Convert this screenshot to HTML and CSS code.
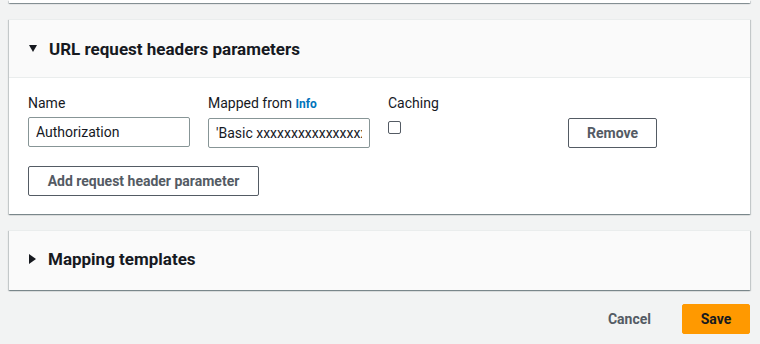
FILE: index.html
```html
<!DOCTYPE html>
<html lang="en">
    <head>
        <meta charset="UTF-8" />
        <meta name="viewport" content="width=device-width, initial-scale=1.0" />
        <title>URL request headers parameters</title>
        <link rel="stylesheet" href="styles.css">
    </head>
    <body>
        <main class="page">
            <div class="card card-cut"></div>

            <section class="card">
                <header class="card-header">
                    <span class="caret caret-down"></span>
                    <h2>URL request headers parameters</h2>
                </header>
                <div class="card-body">
                    <div class="param-row">
                        <div class="field">
                            <label for="headerName">Name</label>
                            <input id="headerName" type="text" value="Authorization">
                        </div>
                        <div class="field">
                            <label for="mappedFrom">Mapped from <a href="#" class="info">Info</a></label>
                            <input id="mappedFrom" type="text" value="'Basic xxxxxxxxxxxxxxxxxxxxxxxx'">
                        </div>
                        <div class="field">
                            <label for="caching">Caching</label>
                            <div class="check-wrap">
                                <input id="caching" type="checkbox">
                            </div>
                        </div>
                        <div class="field field-end">
                            <button class="btn">Remove</button>
                        </div>
                    </div>
                    <button class="btn btn-add">Add request header parameter</button>
                </div>
            </section>

            <section class="card">
                <header class="card-header card-header-only">
                    <span class="caret caret-right"></span>
                    <h2>Mapping templates</h2>
                </header>
            </section>

            <footer class="actions">
                <button class="btn-link">Cancel</button>
                <button class="btn btn-primary">Save</button>
            </footer>
        </main>
    </body>
</html>
```

FILE: styles.css
```css
body {
    margin: 0;
    padding: 0;
    background-color: #f2f3f3;
    color: #16191f;
    font-family: Roboto, "Noto Sans", Arial, sans-serif;
    font-size: 14px;
    line-height: 20px;
}

.page {
    display: flex;
    flex-direction: column;
    gap: 16px;
    padding: 0 10px 0 9px;
}

.card {
    background-color: #fff;
    box-shadow: 0 1px 1px 0 rgba(0, 28, 36, 0.3),
        1px 1px 1px 0 rgba(0, 28, 36, 0.15),
        -1px 1px 1px 0 rgba(0, 28, 36, 0.15);
    border-top: 1px solid #eaeded;
}

.card-cut {
    height: 3px;
    border-top: none;
}

.card-header {
    display: flex;
    align-items: center;
    gap: 12px;
    height: 57px;
    padding: 0 19px;
    background-color: #fafafa;
    border-bottom: 1px solid #eaeded;
}

.card-header-only {
    box-sizing: border-box;
    height: 59px;
    padding-bottom: 4px;
    border-bottom: none;
}

.card-header h2 {
    margin: 0;
    font-size: 17px;
    font-weight: 700;
    line-height: 22px;
}

.caret {
    width: 0;
    height: 0;
    margin-left: 1px;
}

.caret-down {
    border-left: 4px solid transparent;
    border-right: 4px solid transparent;
    border-top: 7px solid #16191f;
}

.caret-right {
    border-top: 5px solid transparent;
    border-bottom: 5px solid transparent;
    border-left: 7px solid #16191f;
}

.card-body {
    padding: 15px 19px 18px;
}

.param-row {
    display: grid;
    grid-template-columns: repeat(4, 162px);
    gap: 18px;
}

.field {
    display: flex;
    flex-direction: column;
}

.field label {
    margin-bottom: 4px;
}

.field-end {
    justify-content: flex-end;
}

.info {
    color: #0073bb;
    font-size: 12px;
    font-weight: 700;
    text-decoration: none;
}

.field input[type="text"] {
    box-sizing: border-box;
    width: 100%;
    height: 30px;
    margin: 0;
    padding: 4px 7px;
    font-family: inherit;
    font-size: 14px;
    color: #16191f;
    border: 1px solid #879596;
    border-radius: 2px;
    background-color: #fff;
}

.check-wrap {
    height: 30px;
    padding-top: 4px;
    box-sizing: border-box;
}

.check-wrap input {
    appearance: none;
    display: block;
    width: 13px;
    height: 13px;
    margin: 0;
    border: 1px solid #545b64;
    border-radius: 2px;
    background-color: #fff;
}

.btn {
    box-sizing: border-box;
    height: 30px;
    padding: 0 19px;
    font-family: inherit;
    font-size: 14px;
    font-weight: 700;
    color: #545b64;
    background-color: #fff;
    border: 1px solid #545b64;
    border-radius: 2px;
    cursor: pointer;
}

.field-end .btn {
    width: 89px;
    padding: 0;
}

.btn-add {
    margin-top: 18px;
    width: 231px;
    padding: 0;
}

.actions {
    display: flex;
    justify-content: flex-end;
    align-items: center;
    gap: 11px;
    margin-top: -2px;
}

.btn-link {
    height: 30px;
    padding: 0 20px;
    font-family: inherit;
    font-size: 14px;
    font-weight: 700;
    color: #545b64;
    background: none;
    border: none;
    cursor: pointer;
}

.btn-primary {
    width: 68px;
    padding: 0;
    color: #16191f;
    background-color: #ff9900;
    border-color: #ff9900;
}
```
